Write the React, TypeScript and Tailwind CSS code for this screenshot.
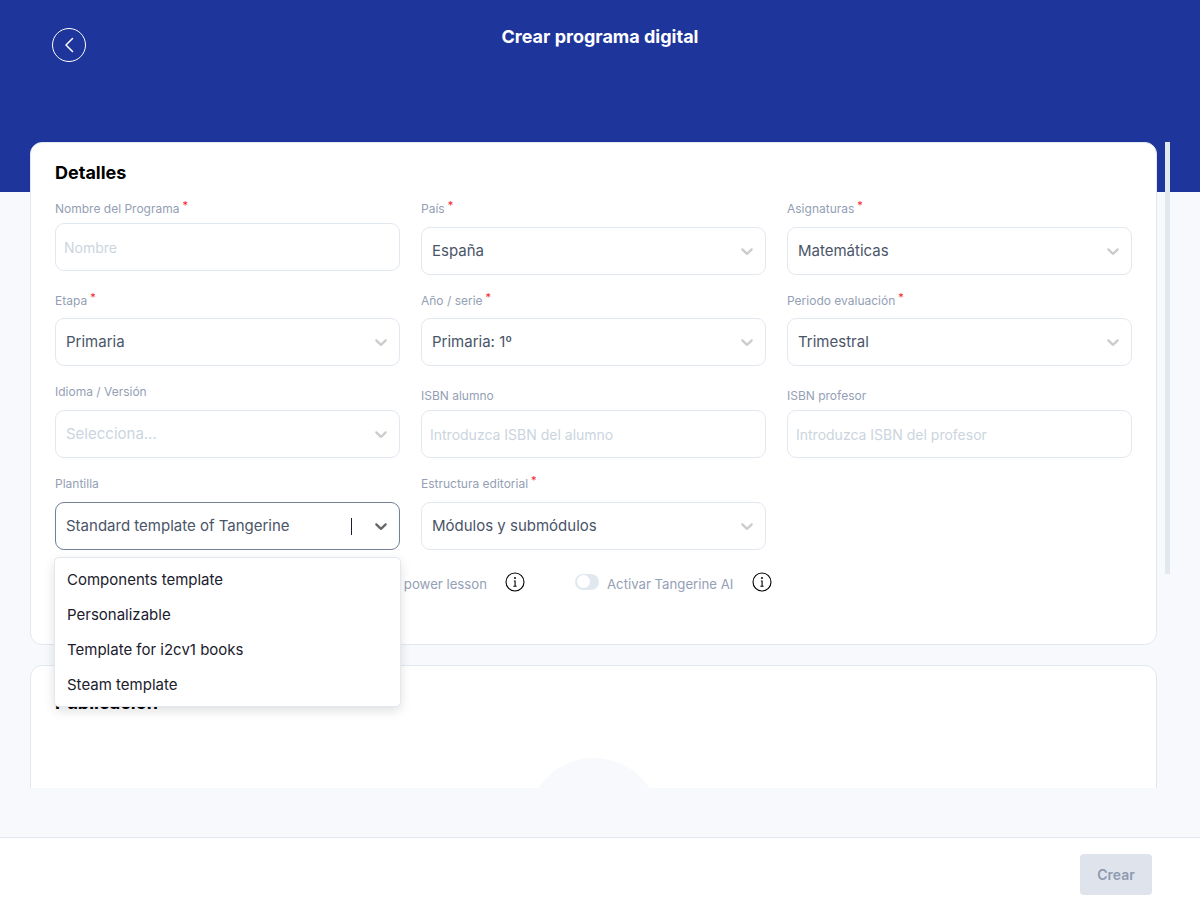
const ChevronIcon = ({ dark }: { dark?: boolean }) => (
  <svg viewBox="0 0 20 20" className={`h-5 w-5 ${dark ? "fill-[#666666]" : "fill-[#cccccc]"}`}>
    <path d="M4.516 7.548c0.436-0.446 1.043-0.481 1.576 0l3.908 3.747 3.908-3.747c0.533-0.481 1.141-0.446 1.574 0 0.436 0.445 0.408 1.197 0 1.615-0.406 0.418-4.695 4.502-4.695 4.502-0.217 0.223-0.502 0.335-0.787 0.335s-0.57-0.112-0.789-0.335c0 0-4.287-4.084-4.695-4.502s-0.436-1.17 0-1.615z" />
  </svg>
);

const InfoIcon = () => (
  <svg viewBox="0 0 20 20" className="h-5 w-5 shrink-0" fill="none" stroke="#000000" strokeWidth="1.1">
    <circle cx="10" cy="10" r="9" />
    <path d="M8.9 9h1.2v5M8.4 14.2h3.2" />
    <circle cx="10" cy="6" r="0.4" fill="#000000" />
  </svg>
);

function Label({ text, required }: { text: string; required?: boolean }) {
  return (
    <div className="flex h-[17px] items-center text-xs text-[#94a0b5]">
      {text}
      {required && <span className="relative -top-[3px] ml-[3px] text-[11px] leading-none text-[#f5222d]">*</span>}
    </div>
  );
}

function SelectField({
  label,
  value,
  required,
  placeholder,
  tight,
}: {
  label: string;
  value: string;
  required?: boolean;
  placeholder?: boolean;
  tight?: boolean;
}) {
  return (
    <div className="flex flex-col">
      <Label text={label} required={required} />
      <div className={`${tight ? "mt-[9px]" : "mt-[10px]"} flex h-12 items-center justify-between rounded-[9px] border border-[#e2e8f0] bg-white pr-[8px] pl-[10px]`}>
        <span className={`text-[15px] ${placeholder ? "text-[#cbd5e0]" : "text-[#4a5568]"}`}>{value}</span>
        <ChevronIcon />
      </div>
    </div>
  );
}

function InputField({ label, placeholder, required, top }: { label: string; placeholder: string; required?: boolean; top?: boolean }) {
  return (
    <div className={`flex flex-col ${top ? "" : "pt-1"}`}>
      <Label text={label} required={required} />
      <div className="mt-[6px] flex h-12 items-center rounded-[9px] border border-[#e2e8f0] bg-white px-2 pt-px text-sm text-[#cbd5e0]">
        {placeholder}
      </div>
    </div>
  );
}

const options = ["Components template", "Personalizable", "Template for i2cv1 books", "Steam template"];

function TemplateField() {
  return (
    <div className="relative flex flex-col">
      <Label text="Plantilla" />
      <div className="mt-[10px] flex h-12 items-center justify-between rounded-[9px] border border-[#718096] bg-white pr-[8px] pl-[10px]">
        <span className="text-[15px] text-[#4a5568]">Standard template of Tangerine</span>
        <div className="flex items-center gap-[19px]">
          <span className="h-[17px] w-px bg-[#1a202c]" />
          <ChevronIcon dark />
        </div>
      </div>
      <div className="absolute top-[82px] -right-px -left-px z-20 rounded-[5px] border border-[#e2e8f0] bg-white py-1 shadow-[0_4px_11px_rgba(0,0,0,0.12)]">
        {options.map((option) => (
          <div key={option} className="flex h-[35px] items-center px-3 pt-0.5 text-[15px] text-[#1a202c]">
            {option}
          </div>
        ))}
      </div>
    </div>
  );
}

export default function App() {
  return (
    <div className="flex h-[910px] flex-col overflow-hidden bg-[#f7f9fc] [font-family:Inter,sans-serif]">
      <header className="relative h-[192px] shrink-0 bg-[#1e359b]">
        <div className="flex justify-center pt-[27px] text-lg leading-5 font-bold text-white">Crear programa digital</div>
        <button className="absolute top-7 left-[52px] flex h-[34px] w-[34px] items-center justify-center rounded-full border-[1.5px] border-white">
          <svg viewBox="0 0 24 24" className="h-6 w-6" fill="none" stroke="#ffffff" strokeWidth="1.5" strokeLinecap="round" strokeLinejoin="round">
            <path d="M15.5 5.5 9 12l6.5 6.5" />
          </svg>
        </button>
      </header>

      <main className="relative -mt-[50px] h-[646px] shrink-0 overflow-hidden pl-[30px]">
        <span className="absolute top-0 left-[1165px] h-[432px] w-[5px] bg-[#e2e8f0]" />

        <section className="relative z-10 h-[503px] w-[1127px] rounded-xl border border-[#e2e8f0] bg-white px-6 pt-[17px]">
          <h2 className="text-lg leading-[26px] font-bold text-black">Detalles</h2>
          <div className="mt-[14px] grid grid-cols-[345px_345px_345px] gap-x-[21px]">
            <InputField label="Nombre del Programa" placeholder="Nombre" required top />
            <SelectField label="País" value="España" required />
            <SelectField label="Asignaturas" value="Matemáticas" required />
          </div>
          <div className="mt-[17px] grid grid-cols-[345px_345px_345px] gap-x-[21px]">
            <SelectField label="Etapa" value="Primaria" required tight />
            <SelectField label="Año / serie" value="Primaria: 1º" required tight />
            <SelectField label="Periodo evaluación" value="Trimestral" required tight />
          </div>
          <div className="mt-[17px] grid grid-cols-[345px_345px_345px] gap-x-[21px]">
            <SelectField label="Idioma / Versión" value="Selecciona..." placeholder />
            <InputField label="ISBN alumno" placeholder="Introduzca ISBN del alumno" />
            <InputField label="ISBN profesor" placeholder="Introduzca ISBN del profesor" />
          </div>
          <div className="mt-[17px] grid grid-cols-[345px_345px_345px] gap-x-[21px]">
            <TemplateField />
            <SelectField label="Estructura editorial" value="Módulos y submódulos" required />
          </div>
          <div className="mt-[19px] flex items-center gap-[50px] text-[13.2px] text-[#94a0b5]">
            <div className="flex w-[470px] items-center justify-end gap-[18px]">
              <span className="pt-1.5">Activar power lesson</span>
              <InfoIcon />
            </div>
            <div className="flex items-center">
              <span className="relative h-4 w-6 rounded-full bg-[#e2e8f0]">
                <span className="absolute top-[1.5px] left-[1.5px] h-[13px] w-[13px] rounded-full bg-white" />
              </span>
              <span className="ml-2 pt-1.5">Activar Tangerine AI</span>
              <span className="ml-[19px]"><InfoIcon /></span>
            </div>
          </div>
        </section>

        <section className="mt-5 h-[300px] w-[1127px] rounded-xl border border-[#e2e8f0] bg-white px-6 pt-6">
          <h2 className="text-lg leading-[26px] font-bold text-black">Publicación</h2>
          <div className="mt-[42px] flex justify-center">
            <div className="h-[132px] w-[132px] rounded-full bg-[#f7f9fc]" />
          </div>
        </section>
      </main>

      <footer className="mt-auto flex h-[73px] shrink-0 items-start justify-end border-t border-[#e2e8f0] bg-white pt-4 pr-12">
        <button className="h-[41px] w-[72px] rounded bg-[#dfe4ec] text-sm font-semibold text-[#8f9ab0]">Crear</button>
      </footer>
    </div>
  );
}
